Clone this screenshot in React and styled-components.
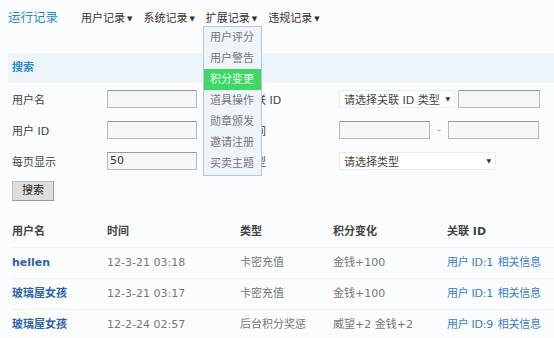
import React from 'react'
import styled, { createGlobalStyle } from 'styled-components'

const GlobalStyle = createGlobalStyle`
  html, body {
    margin: 0;
    padding: 0;
    background: #fbfcfd;
  }
  body {
    width: 554px;
    height: 338px;
    overflow: hidden;
    font-family: "DejaVu Sans", "Noto Sans CJK SC", sans-serif;
    font-size: 11px;
    color: #444;
  }
`

const blue = '#2a8bc8'
const linkBlue = '#2c63a6'

const Page = styled.div`
  position: relative;
  width: 554px;
  height: 338px;
`

const TopBar = styled.div`
  display: flex;
  align-items: center;
  height: 33px;
  padding-left: 8px;
`

const Title = styled.div`
  width: 73px;
  font-size: 12.5px;
  color: ${blue};
`

const Nav = styled.div`
  display: flex;
  gap: 11px;
`

const NavItem = styled.div`
  font-size: 11px;
  color: #333;
  &::after {
    content: '▼';
    font-size: 7px;
    margin-left: 2px;
    vertical-align: 1px;
  }
`

const Menu = styled.div`
  position: absolute;
  left: 203px;
  top: 26px;
  width: 57px;
  padding: 0 0 1px;
  border: 1px solid #b2c9dc;
  background: #eef4f9;
  z-index: 2;
`

const MenuItem = styled.div`
  height: 21px;
  line-height: 21px;
  padding-left: 6px;
  font-size: 11px;
  color: ${p => (p.$active ? '#e8fff0' : '#777')};
  background: ${p => (p.$active ? '#3fd867' : 'transparent')};
`

const Panel = styled.div`
  margin-left: 8px;
  margin-top: 20px;
`

const PanelHead = styled.div`
  height: 30px;
  line-height: 30px;
  padding-left: 4px;
  background: #edf4fa;
  color: ${blue};
  font-weight: bold;
  font-size: 11px;
`

const Form = styled.div`
  display: grid;
  grid-template-columns: 95px 137px 95px 1fr;
  grid-auto-rows: 31px;
  align-items: center;
  padding-left: 4px;
`

const Label = styled.div`
  color: #444;
  white-space: nowrap;
`

const Input = styled.div`
  box-sizing: border-box;
  width: ${p => p.$w || 90}px;
  height: 18px;
  line-height: 16px;
  padding-left: 2px;
  border: 1px solid #b9b9b9;
  border-top-color: #999;
  background: #f6f6f6;
  color: #333;
  font-size: 11px;
`

const Inline = styled.div`
  display: flex;
  align-items: center;
  gap: 3px;
`

const Dash = styled.span`
  width: 12px;
  text-align: center;
  color: #999;
`

const Select = styled.div`
  box-sizing: border-box;
  display: flex;
  justify-content: space-between;
  align-items: center;
  width: ${p => p.$w}px;
  height: 18px;
  padding: 0 4px;
  border: 1px solid #ececec;
  background: #fff;
  color: #444;
  white-space: nowrap;
  &::after {
    content: '▼';
    font-size: 6px;
    color: #333;
  }
`

const Button = styled.div`
  box-sizing: border-box;
  width: 42px;
  height: 20px;
  line-height: 18px;
  margin: 5px 0 0 4px;
  text-align: center;
  border: 1px solid #bdbdbd;
  border-bottom-color: #999;
  border-right-color: #999;
  background: #dedede;
  color: #222;
`

const Table = styled.table`
  margin: 16px 0 0 4px;
  border-collapse: collapse;
  table-layout: fixed;
  width: 542px;
  & th, & td {
    height: 30px;
    line-height: 14px;
    padding: 0;
    text-align: left;
    vertical-align: middle;
    white-space: nowrap;
    overflow: visible;
    border-bottom: 1px solid #f1f3f5;
  }
  & th {
    font-weight: bold;
    color: #444;
  }
`

const Name = styled.a`
  color: ${linkBlue};
  font-weight: bold;
  text-decoration: none;
`

const Muted = styled.td`
  color: #777;
`

const Link = styled.a`
  color: #3c7ec4;
  text-decoration: none;
  margin-right: 5px;
  letter-spacing: -0.3px;
`

const rows = [
  { name: 'hellen', time: '12-3-21 03:18', type: '卡密充值', change: '金钱+100', uid: 1 },
  { name: '玻璃屋女孩', time: '12-3-21 03:17', type: '卡密充值', change: '金钱+100', uid: 1 },
  { name: '玻璃屋女孩', time: '12-2-24 02:57', type: '后台积分奖惩', change: '威望+2 金钱+2', uid: 9 },
]

const menu = ['用户评分', '用户警告', '积分变更', '道具操作', '勋章颁发', '邀请注册', '买卖主题']

export default function App() {
  return (
    <Page>
      <GlobalStyle />
      <TopBar>
        <Title>运行记录</Title>
        <Nav>
          <NavItem>用户记录</NavItem>
          <NavItem>系统记录</NavItem>
          <NavItem>扩展记录</NavItem>
          <NavItem>违规记录</NavItem>
        </Nav>
      </TopBar>
      <Menu>
        {menu.map(m => (
          <MenuItem key={m} $active={m === '积分变更'}>{m}</MenuItem>
        ))}
      </Menu>
      <Panel>
        <PanelHead>搜索</PanelHead>
        <Form>
          <Label>用户名</Label>
          <Input />
          <Label>关联 ID</Label>
          <Inline>
            <Select $w={116}>请选择关联 ID 类型</Select>
            <Input $w={82} />
          </Inline>
          <Label>用户 ID</Label>
          <Input />
          <Label>时间</Label>
          <Inline>
            <Input $w={91} />
            <Dash>-</Dash>
            <Input $w={91} />
          </Inline>
          <Label>每页显示</Label>
          <Input>50</Input>
          <Label>类型</Label>
          <Select $w={157}>请选择类型</Select>
        </Form>
        <Button>搜索</Button>
        <Table>
          <colgroup>
            <col style={{ width: 95 }} />
            <col style={{ width: 133 }} />
            <col style={{ width: 93 }} />
            <col style={{ width: 114 }} />
            <col />
          </colgroup>
          <thead>
            <tr>
              <th>用户名</th>
              <th>时间</th>
              <th>类型</th>
              <th>积分变化</th>
              <th>关联 ID</th>
            </tr>
          </thead>
          <tbody>
            {rows.map((r, i) => (
              <tr key={i}>
                <td><Name>{r.name}</Name></td>
                <Muted>{r.time}</Muted>
                <Muted>{r.type}</Muted>
                <Muted>{r.change}</Muted>
                <td>
                  <Link>用户 ID:{r.uid}</Link>
                  <Link>相关信息</Link>
                </td>
              </tr>
            ))}
          </tbody>
        </Table>
      </Panel>
    </Page>
  )
}
